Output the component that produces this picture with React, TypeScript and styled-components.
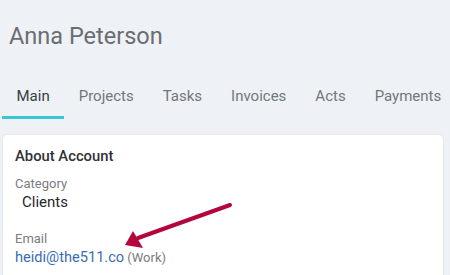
import React from 'react';
import styled, { createGlobalStyle } from 'styled-components';

const GlobalStyle = createGlobalStyle`
    html, body {
        margin: 0;
        padding: 0;
        background: #eef1f6;
        font-family: Roboto, 'Liberation Sans', Arial, sans-serif;
    }
`;

const Page = styled.div`
    position: relative;
    width: 450px;
    height: 275px;
    overflow: hidden;
    padding: 21px 7px 0 3px;
    box-sizing: border-box;
`;

const Title = styled.h1`
    margin: 0 0 0 6px;
    font-size: 23.5px;
    line-height: 30px;
    font-weight: 400;
    color: #6a6d72;
`;

const Tabs = styled.nav`
    display: flex;
    margin: 27px 0 0 -1px;
`;

const Tab = styled.div<{ $active?: boolean }>`
    padding: 9px 14.5px 11px;
    font-size: 15px;
    line-height: 18px;
    color: ${(p) => (p.$active ? '#3a3d42' : '#74777c')};
    border-bottom: 3px solid ${(p) => (p.$active ? '#38c6d2' : 'transparent')};
`;

const Card = styled.section`
    margin-top: 16px;
    background: #fff;
    border-radius: 4px;
    box-shadow: 0 0 2px rgba(0, 0, 0, 0.14);
    padding: 12px 12px 20px;
    height: 200px;
`;

const CardTitle = styled.h2`
    margin: 0 0 10px;
    font-size: 14.8px;
    line-height: 18px;
    font-weight: 500;
    color: #2f3236;
`;

const Field = styled.div`
    margin-bottom: 18px;
`;

const Label = styled.div`
    font-size: 13px;
    line-height: 17px;
    color: #7a7c80;
`;

const Value = styled.div<{ $indent?: boolean }>`
    font-size: 15px;
    line-height: 20px;
    color: #25282c;
    padding-left: ${(p) => (p.$indent ? '7px' : '0')};
`;

const Link = styled.a`
    font-size: 14.6px;
    color: #3a6cb4;
    text-decoration: none;
`;

const Note = styled.span`
    font-size: 13px;
    color: #7a7c80;
    margin-left: 3px;
`;

const Arrow = styled.svg`
    position: absolute;
    left: 0;
    top: 0;
    pointer-events: none;
`;

export default function App() {
    return (
        <>
            <GlobalStyle />
            <Page>
                <Title>Anna Peterson</Title>
                <Tabs>
                    <Tab $active>Main</Tab>
                    <Tab>Projects</Tab>
                    <Tab>Tasks</Tab>
                    <Tab>Invoices</Tab>
                    <Tab>Acts</Tab>
                    <Tab>Payments</Tab>
                </Tabs>
                <Card>
                    <CardTitle>About Account</CardTitle>
                    <Field>
                        <Label>Category</Label>
                        <Value $indent>Clients</Value>
                    </Field>
                    <Field>
                        <Label>Email</Label>
                        <Value>
                            <Link href="#">heidi@the511.co</Link>
                            <Note>(Work)</Note>
                        </Value>
                    </Field>
                </Card>
                <Arrow width="450" height="275" viewBox="0 0 450 275">
                    <line x1="230" y1="205" x2="138" y2="238" stroke="#b3063c" strokeWidth="4" strokeLinecap="round" />
                    <polygon points="125,245 133,231 143,248" fill="#b3063c" />
                </Arrow>
            </Page>
        </>
    );
}
